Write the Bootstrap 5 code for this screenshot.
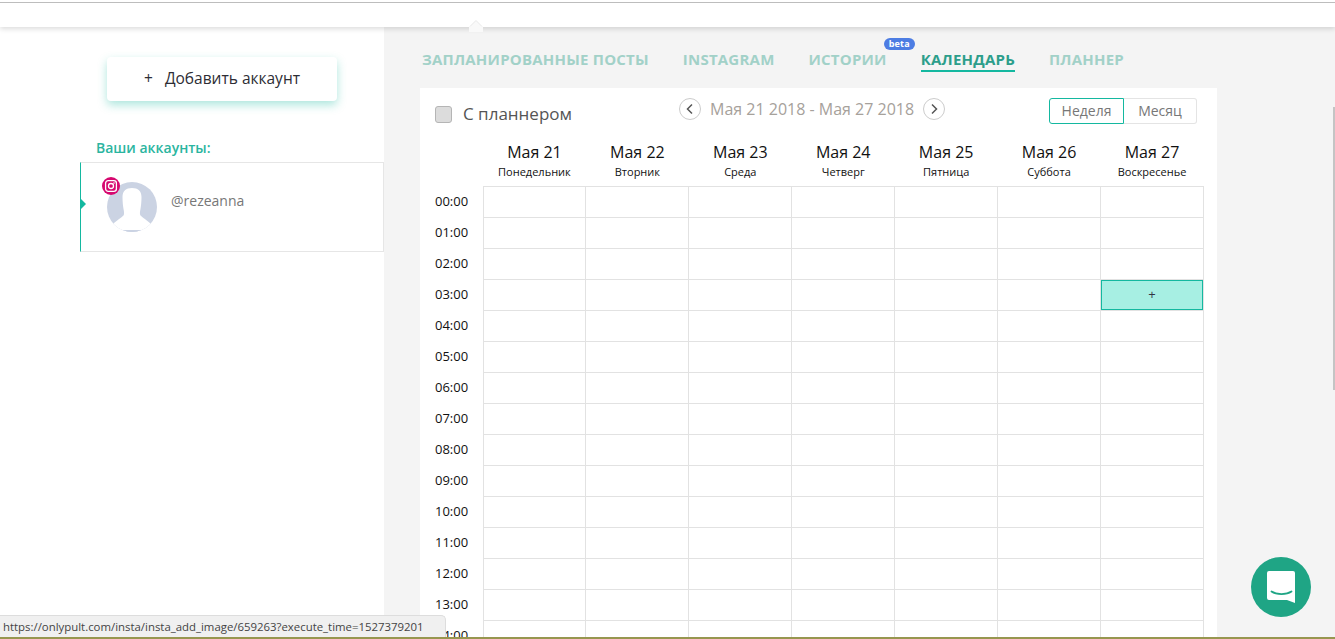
<!DOCTYPE html>
<html lang="ru">
<head>
<meta charset="utf-8">
<title>Календарь</title>
<link rel="stylesheet" href="https://cdn.jsdelivr.net/npm/bootstrap@5.3.0/dist/css/bootstrap.min.css">
<style>
html,body{height:639px;overflow:hidden;}
body{font-family:"Open Sans","Liberation Sans",sans-serif;background:#fff;color:#212529;}
.shell{height:639px;overflow:hidden;position:relative;}
.topbar{height:27px;background:#fff;box-shadow:0 2px 5px rgba(0,0,0,.14);position:relative;z-index:3;padding-top:2px;}
.topbar::before{content:"";display:block;height:1px;background:#bdbdbd;}
.tick{position:absolute;left:469px;top:20px;width:14px;height:12px;z-index:4;}
.workarea{height:612px;}
.leftcol{width:384px;flex:none;background:#fff;padding-top:30px;}
.rightcol{flex:1 1 auto;background:#f4f4f4;padding:0 0 0 36px;min-width:0;}
.addbtn{display:block;width:230px;height:44px;margin-left:107px;padding:0;background:#fff;border:0;border-radius:4px;font-size:15.5px;color:#2d2d35;box-shadow:0 4px 10px rgba(40,190,165,.38);}
.addbtn .plus{margin-right:8px;}
.acc-title{margin:37px 0 0 96px;font-size:14px;line-height:19px;font-weight:600;color:#2bb5a0;}
.acc-card{position:relative;margin:5px 0 0 80px;height:90px;width:304px;border:1px solid #e6e6e6;border-left:1px solid #14b8a0;}
.acc-card::before{content:"";position:absolute;left:0;top:36px;border:5px solid transparent;border-left:5px solid #14b8a0;border-right:0;}
.avatar{position:absolute;left:26px;top:19px;width:50px;height:50px;}
.ig{position:absolute;left:21px;top:14px;width:18px;height:18px;z-index:1;}
.acc-name{position:absolute;left:90px;top:28px;font-size:14px;line-height:20px;color:#777;}
.tabsrow{height:61px;padding:23px 0 0 2px;gap:34px;}
.tabitem{position:relative;font-size:15px;line-height:19px;font-weight:700;letter-spacing:.22px;color:#a2d1c8;text-decoration:none;padding-bottom:1px;}
.tabitem.on{color:#2c9e8b;border-bottom:2px solid #14b8a0;}
.betatag{position:absolute;right:-28px;top:-12px;width:31px;height:12px;border-radius:6px;background:#4d7de3;color:#fff;font-size:9px;line-height:12px;font-weight:700;text-align:center;letter-spacing:.2px;}
.panel{width:797px;background:#fff;height:560px;overflow:hidden;}
.panelhead{position:relative;height:50px;}
.planchk{position:absolute;left:15px;top:17px;display:flex;align-items:center;gap:11px;margin:0;font-size:17px;line-height:18px;color:#555;}
.planchk .form-check-input{width:17px;height:17px;margin:0;background-color:#dcdcdc;border:1px solid #b5b5b5;border-radius:3px;float:none;}
.weeknav{position:absolute;left:259px;top:10px;display:flex;align-items:center;gap:9px;font-size:16px;line-height:22px;color:#a6a19b;}
.roundbtn{width:22px;height:22px;border:1px solid #ccc;border-radius:50%;background:#fff;padding:0;display:flex;align-items:center;justify-content:center;}
.modegroup{position:absolute;left:629px;top:10px;display:flex;}
.modebtn{height:26px;padding:0;font-size:14px;line-height:24px;color:#777;background:#fff;border:1px solid #e4e4e4;text-align:center;}
.modebtn.m1{width:75px;border:1px solid #14b8a0;border-radius:3px 0 0 3px;}
.modebtn.m2{width:73px;border-left:0;border-radius:0 3px 3px 0;}
.caltable{table-layout:fixed;width:784px;margin:0;border-collapse:collapse;}
.caltable th{font-weight:400;text-align:center;padding:0;height:48px;vertical-align:top;border:0;color:#111;}
.caltable .dd{display:block;font-size:16px;line-height:20px;padding-top:4px;}
.caltable .wd{display:block;font-size:11px;line-height:15px;margin-top:2px;}
.caltable td{height:31px;padding:0;border:1px solid #e2e2e2;}
.caltable td.tm{border:0;font-size:13px;color:#111;text-align:left;padding-left:15px;}
.caltable col.tc{width:63px;}
.pickcell{height:30px;background:#a7efe3;border:1px solid #14b8a0;text-align:center;font-size:13px;line-height:27px;color:#334;}
.statusbar{position:absolute;left:0;bottom:2px;width:446px;height:22px;padding:0 0 0 3px;background:#f0f0f0;border-top:1px solid #ddd;border-right:1px solid #ddd;border-top-right-radius:5px;font-size:11.4px;line-height:21px;color:#444;z-index:5;white-space:nowrap;}
.baseline{position:absolute;left:0;right:0;bottom:0;height:2px;background:#97964f;z-index:6;}
.scrollthumb{position:absolute;right:0;top:107px;width:2px;height:283px;background:#c4c4c4;z-index:4;}
.chatbtn{position:absolute;left:1251px;top:557px;width:60px;height:60px;border-radius:50%;background:#1fa585;display:flex;align-items:center;justify-content:center;z-index:5;padding:0;border:0;}
</style>
</head>
<body>
<div class="shell">
  <div class="topbar"></div>
  <svg class="tick" viewBox="0 0 14 12" aria-hidden="true"><path d="M0 12V7l7-7 7 7v5z" fill="#f9f9f9"/><path d="M1 6.500 7 .5l6 6" fill="none" stroke="#e9e9e9"/></svg>
  <div class="workarea d-flex">
    <aside class="leftcol">
      <button type="button" class="addbtn"><span class="plus">+</span> Добавить аккаунт</button>
      <div class="acc-title">Ваши аккаунты:</div>
      <div class="acc-card">
        <svg class="ig" viewBox="0 0 18 18" aria-hidden="true"><circle cx="9" cy="9" r="9" fill="#d6086f"/><rect x="3.6" y="3.6" width="10.8" height="10.8" rx="2.6" fill="none" stroke="#fff" stroke-width="1.3"/><circle cx="9" cy="9" r="2.5" fill="none" stroke="#fff" stroke-width="1.3"/><circle cx="12" cy="6" r=".8" fill="#fff"/></svg>
        <svg class="avatar" viewBox="0 0 50 50" aria-hidden="true"><defs><clipPath id="cav"><circle cx="25" cy="25" r="25"/></clipPath></defs><circle cx="25" cy="25" r="25" fill="#cbd3e3"/><path clip-path="url(#cav)" d="M25 6c-6 0-9.500 3-9.500 9 0 5 .5 9 1 12 .5 2.500 1 5 0 6.500-2 2-7 5-11 9v6h39v-6c-4-4-9-7-11-9-1-1.500-.5-4 0-6.500.5-3 1-7 1-12 0-6-3.500-9-9.500-9z" fill="#fff"/><path clip-path="url(#cav)" d="M10 48h30v3H10z" fill="#cbd3e3"/></svg>
        <span class="acc-name">@rezeanna</span>
      </div>
    </aside>
    <main class="rightcol">
      <nav class="tabsrow d-flex align-items-start">
        <a class="tabitem" href="#">ЗАПЛАНИРОВАННЫЕ ПОСТЫ</a>
        <a class="tabitem" href="#">INSTAGRAM</a>
        <a class="tabitem" href="#">ИСТОРИИ<span class="betatag">beta</span></a>
        <a class="tabitem on" href="#">КАЛЕНДАРЬ</a>
        <a class="tabitem" href="#">ПЛАННЕР</a>
      </nav>
      <section class="panel">
        <div class="panelhead">
          <label class="planchk"><input class="form-check-input" type="checkbox"> С планнером</label>
          <div class="weeknav">
            <button type="button" class="roundbtn" aria-label="Назад"><svg width="10" height="12" viewBox="0 0 10 12"><path d="M7 1.500 2.500 6 7 10.500" fill="none" stroke="#555" stroke-width="1.500"/></svg></button>
            <span>Мая 21 2018 - Мая 27 2018</span>
            <button type="button" class="roundbtn" aria-label="Вперёд"><svg width="10" height="12" viewBox="0 0 10 12"><path d="M3 1.500 7.500 6 3 10.500" fill="none" stroke="#555" stroke-width="1.500"/></svg></button>
          </div>
          <div class="modegroup">
            <button type="button" class="modebtn m1">Неделя</button>
            <button type="button" class="modebtn m2">Месяц</button>
          </div>
        </div>
        <table class="caltable">
          <colgroup><col class="tc"><col><col><col><col><col><col><col></colgroup>
          <thead><tr>
            <th></th>
            <th><span class="dd">Мая 21</span><span class="wd">Понедельник</span></th>
            <th><span class="dd">Мая 22</span><span class="wd">Вторник</span></th>
            <th><span class="dd">Мая 23</span><span class="wd">Среда</span></th>
            <th><span class="dd">Мая 24</span><span class="wd">Четверг</span></th>
            <th><span class="dd">Мая 25</span><span class="wd">Пятница</span></th>
            <th><span class="dd">Мая 26</span><span class="wd">Суббота</span></th>
            <th><span class="dd">Мая 27</span><span class="wd">Воскресенье</span></th>
          </tr></thead>
          <tbody>
            <tr><td class="tm">00:00</td><td></td><td></td><td></td><td></td><td></td><td></td><td></td></tr>
            <tr><td class="tm">01:00</td><td></td><td></td><td></td><td></td><td></td><td></td><td></td></tr>
            <tr><td class="tm">02:00</td><td></td><td></td><td></td><td></td><td></td><td></td><td></td></tr>
            <tr><td class="tm">03:00</td><td></td><td></td><td></td><td></td><td></td><td></td><td><div class="pickcell">+</div></td></tr>
            <tr><td class="tm">04:00</td><td></td><td></td><td></td><td></td><td></td><td></td><td></td></tr>
            <tr><td class="tm">05:00</td><td></td><td></td><td></td><td></td><td></td><td></td><td></td></tr>
            <tr><td class="tm">06:00</td><td></td><td></td><td></td><td></td><td></td><td></td><td></td></tr>
            <tr><td class="tm">07:00</td><td></td><td></td><td></td><td></td><td></td><td></td><td></td></tr>
            <tr><td class="tm">08:00</td><td></td><td></td><td></td><td></td><td></td><td></td><td></td></tr>
            <tr><td class="tm">09:00</td><td></td><td></td><td></td><td></td><td></td><td></td><td></td></tr>
            <tr><td class="tm">10:00</td><td></td><td></td><td></td><td></td><td></td><td></td><td></td></tr>
            <tr><td class="tm">11:00</td><td></td><td></td><td></td><td></td><td></td><td></td><td></td></tr>
            <tr><td class="tm">12:00</td><td></td><td></td><td></td><td></td><td></td><td></td><td></td></tr>
            <tr><td class="tm">13:00</td><td></td><td></td><td></td><td></td><td></td><td></td><td></td></tr>
            <tr><td class="tm">14:00</td><td></td><td></td><td></td><td></td><td></td><td></td><td></td></tr>
          </tbody>
        </table>
      </section>
    </main>
  </div>
  <div class="scrollthumb"></div>
  <div class="statusbar">https://onlypult.com/insta/insta_add_image/659263?execute_time=1527379201</div>
  <div class="baseline"></div>
  <button type="button" class="chatbtn" aria-label="Чат"><svg width="28" height="32" viewBox="0 0 28 32"><path d="M2 0h24a2 2 0 0 1 2 2v30l-8-3H2a2 2 0 0 1-2-2V2a2 2 0 0 1 2-2z" fill="#fff"/><path d="M4.500 20.500c5 3.500 15 3.500 20 0" fill="none" stroke="#1fa585" stroke-width="1.800" stroke-linecap="round"/></svg></button>
</div>
<script src="https://cdn.jsdelivr.net/npm/bootstrap@5.3.0/dist/js/bootstrap.bundle.min.js"></script>
</body>
</html>
